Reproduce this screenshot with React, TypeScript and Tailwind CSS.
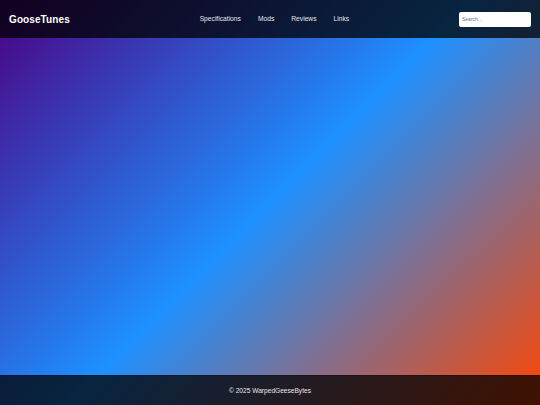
export default function App() {
  const links = ['Specifications', 'Mods', 'Reviews', 'Links'];
  return (
    <div className="min-h-screen flex flex-col bg-[linear-gradient(135deg,#4b0082,#1e90ff,#ff4500)] font-['Liberation_Sans',Arial,sans-serif] text-white">
      {/* Header */}
      <header className="h-[38px] shrink-0 flex items-center justify-between px-[9px] bg-black/75">
        <div className="text-[10px] font-bold tracking-[0.1px]">GooseTunes</div>
        <nav className="flex items-center gap-[17px] text-[6.7px] text-gray-200 ml-[20px]">
          {links.map((l) => (
            <a key={l} href="#">{l}</a>
          ))}
        </nav>
        <input
          type="text"
          placeholder="Search..."
          className="w-[72px] h-[15px] rounded-[2px] bg-white px-[3px] text-[5px] text-gray-800 placeholder:text-gray-500 outline-none"
        />
      </header>

      {/* Main */}
      <main className="flex-1" />

      {/* Footer */}
      <footer className="h-[30px] shrink-0 flex items-center justify-center bg-black/75 border-t border-black/20">
        <p className="text-[6.6px] text-gray-200">© 2025 WarpedGeeseBytes</p>
      </footer>
    </div>
  );
}
